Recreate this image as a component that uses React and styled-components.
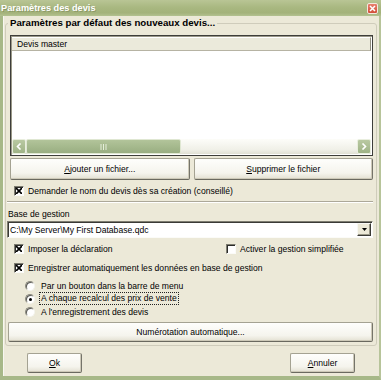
import React from 'react';
import styled, { createGlobalStyle } from 'styled-components';

const Global = createGlobalStyle`
  html, body { margin: 0; padding: 0; background: #ece9d8; }
  body { font-family: "Liberation Sans", Arial, sans-serif; font-size: 8.6px; color: #000; }
  * { box-sizing: border-box; }
`;

const Window = styled.div`
  width: 381px;
  height: 380px;
  display: flex;
  flex-direction: column;
  background: #ece9d8;
  overflow: hidden;
`;

const TitleBar = styled.div`
  height: 16px;
  flex: none;
  display: flex;
  align-items: center;
  justify-content: space-between;
  padding: 0 3px 0 1px;
  background: linear-gradient(#b9c595, #a9b881 45%, #a3b27a 80%, #b3c190);
  color: #fff;
  font-weight: bold;
  font-size: 9.2px;
  text-shadow: 1px 1px 0 rgba(90, 100, 60, 0.35);
`;

const CloseBox = styled.div`
  width: 11px;
  height: 11px;
  margin-top: 1px;
  border: 1px solid #f4e7de;
  border-radius: 2px;
  background: linear-gradient(#e8806e, #d24e38);
  display: flex;
  align-items: center;
  justify-content: center;
`;

const Frame = styled.div`
  flex: 1;
  display: flex;
  flex-direction: column;
  border-left: 3px solid #a7b888;
  border-right: 2px solid #b7c49a;
  border-bottom: 4px solid #a7b888;
  box-shadow: inset 1px 0 0 #f7f7f0;
`;

const Group = styled.fieldset`
  margin: 1px 2px 0 2px;
  padding: 6px 3px 3px 1px;
  border: 1px solid #cfccbb;
  border-radius: 3px;
  min-width: 0;
  display: flex;
  flex-direction: column;
`;

const Legend = styled.legend`
  padding: 0 2px;
  margin-left: 1px;
  font-weight: bold;
  font-size: 9.7px;
  line-height: 12px;
`;

const ListBox = styled.div`
  margin-left: 3px;
  height: 121px;
  display: flex;
  flex-direction: column;
  border: 1px solid #3e3e3a;
  box-shadow: inset 1px 1px 0 #9a9888;
  background: #fff;
`;

const ListHeader = styled.div`
  height: 14px;
  margin: 1px 1px 0 1px;
  padding-left: 5px;
  display: flex;
  align-items: center;
  background: #ebeadb;
  border-top: 1px solid #fff;
  border-right: 1px solid #8f8d7f;
  border-bottom: 1px solid #b6b3a3;
`;

const ListBody = styled.div`
  flex: 1;
`;

const HScroll = styled.div`
  height: 15px;
  margin: 0 1px 1px 1px;
  display: flex;
  align-items: stretch;
  background: linear-gradient(#fdfdf9, #f0f0e8 70%, #e0e0d4);
`;

const ScrollBtn = styled.div`
  width: 14px;
  flex: none;
  display: flex;
  align-items: center;
  justify-content: center;
  border: 1px solid #e9eede;
  border-radius: 2px;
  background: linear-gradient(#b9c9a2, #9fb386);
`;

const Thumb = styled.div`
  width: 155px;
  display: flex;
  align-items: center;
  justify-content: center;
  border: 1px solid #dfe7d2;
  border-radius: 2px;
  background: linear-gradient(#b2c49a, #a3b78b 60%, #99ad82);
`;

const Track = styled.div`
  flex: 1;
`;

const ButtonRow = styled.div`
  margin: 2px 0 0 3px;
  display: grid;
  grid-template-columns: 1fr 1fr;
  gap: 4px;
`;

const Button = styled.div`
  height: ${p => p.$h || 20}px;
  width: ${p => (p.$w ? `${p.$w}px` : 'auto')};
  margin-left: ${p => p.$ml || 0}px;
  margin-top: ${p => p.$mt || 0}px;
  display: flex;
  align-items: center;
  justify-content: center;
  border: 1px solid #a4a292;
  border-right-color: #75746a;
  border-bottom-color: #6a695f;
  border-radius: 2px;
  background: linear-gradient(#fefefc, #f5f4ed 70%, #e3e0d2);
  box-shadow: inset -1px -1px 0 #cdc9b8;
`;

const Row = styled.div`
  height: 13px;
  margin-top: ${p => p.$mt || 0}px;
  padding-left: ${p => p.$pl || 0}px;
  display: flex;
  align-items: center;
`;

const Item = styled.label`
  display: flex;
  align-items: center;
  gap: ${p => p.$gap || 4}px;
  width: ${p => (p.$w ? `${p.$w}px` : 'auto')};
`;

const Box = styled.span`
  width: 10px;
  height: 10px;
  flex: none;
  display: flex;
  align-items: center;
  justify-content: center;
  border: 1px solid;
  border-color: #7d7c70 #fbfbf8 #fbfbf8 #7d7c70;
  box-shadow: inset 1px 1px 0 #2c2c2a;
  background: #fff;
`;

const Round = styled.span`
  width: 10px;
  height: 10px;
  flex: none;
  border-radius: 50%;
  display: flex;
  align-items: center;
  justify-content: center;
  border: 1px solid;
  border-color: #8a897d #f4f4ee #f4f4ee #8a897d;
  box-shadow: inset 1px 1px 0 #5a5a56;
  background: #fff;
`;

const Dot = styled.span`
  width: 3px;
  height: 3px;
  border-radius: 50%;
  background: #000;
  margin: 1px 0 0 1px;
`;

const Focus = styled.span`
  outline: 1px dotted #222;
  padding: 0 1px;
  line-height: 11px;
`;

const Separator = styled.div`
  margin-top: 4px;
  height: 2px;
  border-top: 1px solid #aca899;
  border-bottom: 1px solid #fff;
`;

const FieldLabel = styled.div`
  margin: 6px 0 0 1px;
  line-height: 11px;
`;

const Combo = styled.div`
  margin-top: 1px;
  height: 17px;
  display: flex;
  align-items: stretch;
  border: 1px solid;
  border-color: #7d7c70 #fbfbf8 #fbfbf8 #7d7c70;
  box-shadow: inset 1px 1px 0 #3a3a36;
  background: #fff;
`;

const ComboText = styled.div`
  flex: 1;
  display: flex;
  align-items: center;
  padding-left: 2px;
`;

const ComboArrow = styled.div`
  width: 14px;
  margin: 1px 1px 1px 0;
  display: flex;
  align-items: center;
  justify-content: center;
  background: #ece9d8;
  border: 1px solid;
  border-color: #f8f8f4 #3a3a36 #3a3a36 #f8f8f4;
  box-shadow: inset -1px -1px 0 #9a9888;
`;

const Footer = styled.div`
  padding: 7px 24px 0 24px;
  display: flex;
  justify-content: space-between;
`;

const Check = ({ checked }) => (
  <Box>
    {checked && (
      <svg width="6" height="6" viewBox="0 0 6 6">
        <path d="M0.5 0.5 L5.5 5.5 M5.5 0.5 L0.5 5.5" stroke="#000" strokeWidth="1.7" strokeLinecap="square" />
      </svg>
    )}
  </Box>
);

const Radio = ({ checked }) => <Round>{checked && <Dot />}</Round>;

export default function App() {
  return (
    <>
      <Global />
      <Window>
        <TitleBar>
          <span>Paramètres des devis</span>
          <CloseBox>
            <svg width="7" height="7" viewBox="0 0 7 7">
              <path d="M1 1 L6 6 M6 1 L1 6" stroke="#fff" strokeWidth="1.5" />
            </svg>
          </CloseBox>
        </TitleBar>
        <Frame>
          <Group>
            <Legend>Paramètres par défaut des nouveaux devis...</Legend>
            <ListBox>
              <ListHeader>Devis master</ListHeader>
              <ListBody />
              <HScroll>
                <ScrollBtn>
                  <svg width="6" height="7" viewBox="0 0 6 7">
                    <path d="M4.5 0.5 L1.5 3.5 L4.5 6.5" stroke="#fff" strokeWidth="1.6" fill="none" />
                  </svg>
                </ScrollBtn>
                <Thumb>
                  <svg width="7" height="6" viewBox="0 0 7 6">
                    <path d="M1 0 V6 M3.5 0 V6 M6 0 V6" stroke="#e6eedb" strokeWidth="1" />
                  </svg>
                </Thumb>
                <Track />
                <ScrollBtn>
                  <svg width="6" height="7" viewBox="0 0 6 7">
                    <path d="M1.5 0.5 L4.5 3.5 L1.5 6.5" stroke="#fff" strokeWidth="1.6" fill="none" />
                  </svg>
                </ScrollBtn>
              </HScroll>
            </ListBox>
            <ButtonRow>
              <Button $h={22}><span><u>A</u>jouter un fichier...</span></Button>
              <Button $h={22}><span><u>S</u>upprimer le fichier</span></Button>
            </ButtonRow>
            <Row $mt={4} $pl={7}>
              <Item><Check checked /><span>Demander le nom du devis dès sa création (conseillé)</span></Item>
            </Row>
            <Separator />
            <FieldLabel>Base de gestion</FieldLabel>
            <Combo>
              <ComboText>C:\My Server\My First Database.qdc</ComboText>
              <ComboArrow>
                <svg width="5" height="3" viewBox="0 0 5 3">
                  <path d="M0 0 H5 L2.5 3 Z" fill="#000" />
                </svg>
              </ComboArrow>
            </Combo>
            <Row $mt={4} $pl={7}>
              <Item $w={212}><Check checked /><span>Imposer la déclaration</span></Item>
              <Item><Check /><span>Activer la gestion simplifiée</span></Item>
            </Row>
            <Row $mt={6} $pl={7}>
              <Item><Check checked /><span>Enregistrer automatiquement les données en base de gestion</span></Item>
            </Row>
            <Row $mt={5} $pl={18}>
              <Item $gap={6}><Radio /><span>Par un bouton dans la barre de menu</span></Item>
            </Row>
            <Row $pl={18}>
              <Item $gap={5}><Radio checked /><Focus>A chaque recalcul des prix de vente</Focus></Item>
            </Row>
            <Row $pl={18}>
              <Item $gap={6}><Radio /><span>A l'enregistrement des devis</span></Item>
            </Row>
            <Button $h={20} $ml={1} $mt={4}>Numérotation automatique...</Button>
          </Group>
          <Footer>
            <Button $w={55}><span><u>O</u>k</span></Button>
            <Button $w={65}><span><u>A</u>nnuler</span></Button>
          </Footer>
        </Frame>
      </Window>
    </>
  );
}
